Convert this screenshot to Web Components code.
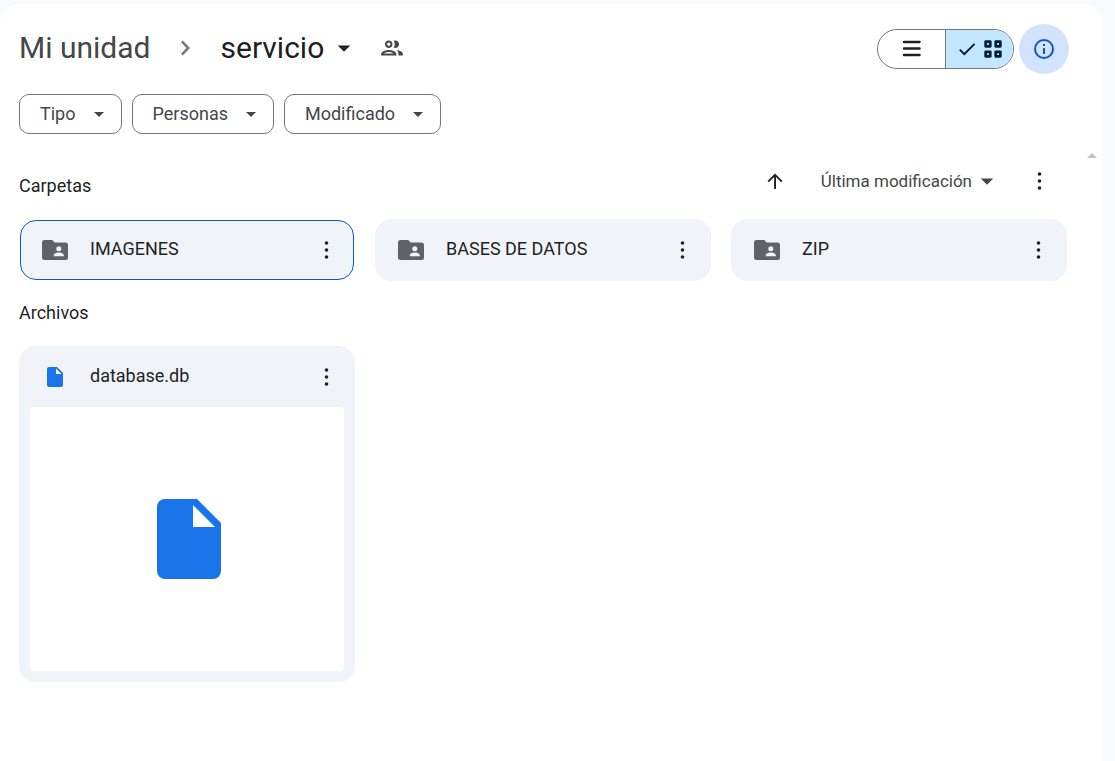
<!DOCTYPE html>
<html lang="es">
<head>
<meta charset="utf-8">
<title>servicio - Mi unidad</title>
<style>
  html { height: 100%; }
  body {
    margin: 0;
    min-height: 100%;
    display: flex;
    background: #f8fafd;
    color: #1f1f1f;
    font-family: Roboto, "Liberation Sans", sans-serif;
    font-size: 18px;
    line-height: 24px;
  }
</style>
</head>
<body>
<drive-app></drive-app>
<script>
const ICONS = {
  chevron: ['0 0 24 24', '<path d="M8.3 17.3 13.4 12 8.300 6.700 9.900 5.100 16.600 12 9.900 18.900z"/>'],
  caret: ['0 0 24 24', '<path d="M7 10l5 5 5-5z"/>'],
  menu: ['0 0 24 24', '<g fill="none" stroke="currentColor" stroke-width="2.5" stroke-linecap="round"><path d="M4 5h15.500M4 11.500h15.500M4 18h15.500"/></g>'],
  check: ['0 0 24 24', '<path d="M9 16.2 4.8 12l-1.4 1.4L9 19 21 7l-1.4-1.4z"/>'],
  grid: ['0 0 24 24', '<g fill="none" stroke="currentColor" stroke-width="3" stroke-linejoin="round"><path d="M4 4h5v5H4zM15 4h5v5h-5zM4 15h5v5H4zM15 15h5v5h-5z"/></g>'],
  info: ['0 0 24 24', '<path d="M11 7h2v2h-2zm0 4h2v6h-2zm1-9a10 10 0 1 0 0 20 10 10 0 0 0 0-20zm0 18a8 8 0 1 1 0-16 8 8 0 0 1 0 16z"/>'],
  up: ['0 0 24 24', '<path d="M4.500 12l1.300 1.300L11.100 8V20h1.900V8l5.200 5.300L19.500 12 12 4.500z"/>'],
  dots: ['0 0 24 24', '<circle cx="12.500" cy="5" r="1.800"/><circle cx="12.500" cy="12" r="1.800"/><circle cx="12.500" cy="19" r="1.800"/>'],
  people: ['0 0 24 24', '<path d="M9 13.750c-2.340 0-7 1.170-7 3.500V19h14v-1.750c0-2.330-4.660-3.500-7-3.500zM4.340 17c.84-.58 2.870-1.250 4.660-1.250s3.820.67 4.660 1.250H4.340zM9 12c1.930 0 3.500-1.570 3.500-3.500S10.930 5 9 5 5.500 6.570 5.500 8.500 7.070 12 9 12zm0-5c.83 0 1.500.67 1.500 1.500S9.830 10 9 10s-1.500-.67-1.500-1.500S8.170 7 9 7zm7.040 6.810c1.160.84 1.960 1.960 1.960 3.440V19h4v-1.750c0-2.020-3.500-3.170-5.960-3.440zM15 12c1.930 0 3.500-1.570 3.500-3.500S16.930 5 15 5c-.54 0-1.040.13-1.500.35.63.89 1 1.980 1 3.150s-.37 2.260-1 3.150c.46.220.96.350 1.500.350z"/>'],
  folder: ['0 0 26 20', '<path fill-rule="evenodd" d="M2.500 0h7.700l2.600 2.500H23.500A2.500 2.500 0 0 1 26 5v12.500a2.500 2.500 0 0 1-2.500 2.500h-21A2.500 2.500 0 0 1 0 17.500v-15A2.500 2.500 0 0 1 2.500 0zM16.800 6.300a2.500 2.500 0 1 0 0 5 2.500 2.500 0 0 0 0-5zM16.800 12.400c-1.900 0-5 .9-5 2.500v1.300h10v-1.300c0-1.600-3.100-2.500-5-2.500z"/>'],
  file: ['0 0 64 80', '<path d="M8 0h32l24 24v48a8 8 0 0 1-8 8H8a8 8 0 0 1-8-8V8a8 8 0 0 1 8-8z"/><path fill="#fff" d="M36 6v22h22z"/>'],
};

function define(name, html, setup) {
  const tpl = document.createElement('template');
  tpl.innerHTML = html;
  customElements.define(name, class extends HTMLElement {
    constructor() {
      super();
      this.attachShadow({ mode: 'open' }).append(tpl.content.cloneNode(true));
    }
    connectedCallback() { if (setup) setup(this, this.shadowRoot); }
  });
}

const RESET = `
  *, :host { box-sizing: border-box; }
  button { font: inherit; color: inherit; background: none; border: 0; margin: 0; padding: 0; cursor: pointer; }`;

/* <drive-icon name>: width and height come from --w and --h */
define('drive-icon', `<style>
  :host { display: inline-flex; flex: none; width: var(--w, 24px); height: var(--h, var(--w, 24px)); }
  svg { width: 100%; height: 100%; fill: currentColor; }
</style>`, (host, root) => {
  const [box, body] = ICONS[host.getAttribute('name')];
  root.querySelector('svg')?.remove();
  root.append(document.createRange().createContextualFragment(
    `<svg viewBox="${box}" aria-hidden="true">${body}</svg>`));
});

define('drive-more', `<style>${RESET}
  :host { display: block; flex: none; }
  button { display: flex; align-items: center; justify-content: center; width: 32px; height: 32px; color: #1f1f1f; }
  drive-icon { --w: 24px; }
</style><button aria-label="Más acciones"><drive-icon name="dots"></drive-icon></button>`);

define('drive-chip', `<style>${RESET}
  :host { display: block; }
  button { display: flex; align-items: center; gap: 11px; height: 40px; padding: 0 10px 0 20px;
    border: 1px solid #747775; border-radius: 10px; color: #444746; }
</style><button><slot></slot><drive-icon name="caret"></drive-icon></button>`);

define('drive-breadcrumb', `<style>${RESET}
  :host { display: block; }
  nav { display: flex; align-items: center; font-size: 30px; line-height: 40px; }
  a { color: #444746; text-decoration: none; }
  .sep { --w: 26px; color: #747775; margin: 0 22px; }
  .current { display: flex; align-items: center; gap: 5px; color: #1f1f1f; }
  .current drive-icon { --w: 30px; }
  .shared { display: flex; margin-left: 20px; color: #444746; }
  .shared drive-icon { --w: 26px; }
</style>
<nav aria-label="Ruta">
  <a href="#">Mi unidad</a>
  <drive-icon class="sep" name="chevron"></drive-icon>
  <button class="current">servicio<drive-icon name="caret"></drive-icon></button>
  <button class="shared" aria-label="Compartido"><drive-icon name="people"></drive-icon></button>
</nav>`);

define('view-toggle', `<style>${RESET}
  :host { display: flex; height: 40px; border: 1px solid #747775; border-radius: 20px; overflow: hidden; }
  button { display: flex; align-items: center; justify-content: center; width: 67px; color: #1f1f1f; }
  .on { width: 68px; border-left: 1px solid #747775; background: #c2e7ff; color: #001d35; gap: 4px; }
  .on drive-icon { --w: 22px; }
</style>
<button aria-label="Diseño de lista" aria-pressed="false"><drive-icon name="menu"></drive-icon></button>
<button class="on" aria-label="Diseño de cuadrícula" aria-pressed="true"><drive-icon name="check"></drive-icon><drive-icon name="grid"></drive-icon></button>`);

define('info-button', `<style>${RESET}
  :host { display: block; }
  button { display: flex; align-items: center; justify-content: center; width: 50px; height: 50px;
    border-radius: 50%; background: #d3e3fd; color: #0b57d0; }
  drive-icon { --w: 24px; }
</style><button aria-label="Ver detalles"><drive-icon name="info"></drive-icon></button>`);

define('sort-bar', `<style>${RESET}
  :host { display: flex; align-items: center; color: #444746; }
  .dir { display: flex; margin-right: 34px; color: #1f1f1f; }
  .key { display: flex; align-items: center; font-size: 17px; }
  .key drive-icon { --w: 30px; }
  drive-more { margin-left: 21px; }
</style>
<button class="dir" aria-label="Invertir el orden"><drive-icon name="up"></drive-icon></button>
<button class="key">Última modificación<drive-icon name="caret"></drive-icon></button>
<drive-more></drive-more>`);

define('item-head', `<style>${RESET}
  :host { display: flex; align-items: center; height: 60px; padding: 0 12px 0 21px; }
  .icon { display: flex; justify-content: center; width: 28px; margin-right: 21px; }
  .name { flex: 1; min-width: 0; padding-bottom: 2px; overflow: hidden; text-overflow: ellipsis; white-space: nowrap; }
</style>
<span class="icon"><slot name="icon"></slot></span><span class="name"><slot></slot></span><drive-more></drive-more>`);

define('folder-card', `<style>${RESET}
  :host { display: block; border: 1px solid #f0f4f9; border-radius: 16px; background: #f0f4f9; }
  :host([selected]) { margin: 1px; border-color: #0b57d0; }
  :host([selected]) item-head { height: 58px; margin: 0 -1px; }
  drive-icon { --w: 26px; --h: 20px; color: #5f6368; }
</style><item-head><drive-icon slot="icon" name="folder"></drive-icon><slot></slot></item-head>`);

define('file-card', `<style>${RESET}
  :host { display: flex; flex-direction: column; aspect-ratio: 1; border-radius: 16px; background: #f0f4f9; color: #1f1f1f; padding: 0 0 11px; }
  item-head { height: 61px; padding: 0 13px 0 22px; }
  .small { --w: 16px; --h: 20px; color: #1a73e8; }
  .preview { flex: 1; margin: 0 11px; padding-left: 4px; border-radius: 4px; background: #fff; display: flex; align-items: center; justify-content: center; color: #1a73e8; }
  .preview drive-icon { --w: 64px; --h: 80px; }
</style>
<item-head><drive-icon class="small" slot="icon" name="file"></drive-icon><slot></slot></item-head>
<div class="preview"><drive-icon name="file"></drive-icon></div>`);

define('drive-app', `<style>${RESET}
  :host { display: block; flex: 1; position: relative; margin: 4px 12px 0 0; padding: 20px 36px 24px 19px;
    border-radius: 20px 20px 0 0; background: #fff; }
  header { display: flex; align-items: center; gap: 5px; height: 50px; margin-right: -2px; }
  drive-breadcrumb { flex: 1; padding-bottom: 2px; }
  .filters { display: flex; flex-wrap: wrap; gap: 10px; margin-top: 20px; }
  .bar { display: flex; align-items: center; justify-content: space-between; margin-top: 30px; }
  .bar sort-bar { margin-right: 12px; }
  h2 { margin: 0; font-size: 18px; line-height: 24px; font-weight: 400; }
  .bar h2 { padding-top: 10px; }
  .grid { display: grid; grid-template-columns: repeat(3, minmax(0, 1fr)); gap: 20px; }
  .folders { margin: 21px 0 20px; }
  .files { margin-top: 21px; }
  .scroll { position: absolute; top: 149px; right: 6px; border: 5px solid transparent; border-top: 0; border-bottom: 5px solid #c1c1c1; }
</style>
<header><drive-breadcrumb></drive-breadcrumb><view-toggle></view-toggle><info-button></info-button></header>
<div class="filters"><drive-chip>Tipo</drive-chip><drive-chip>Personas</drive-chip><drive-chip>Modificado</drive-chip></div>
<main>
  <div class="bar"><h2>Carpetas</h2><sort-bar></sort-bar></div>
  <div class="grid folders">
    <folder-card selected>IMAGENES</folder-card>
    <folder-card>BASES DE DATOS</folder-card>
    <folder-card>ZIP</folder-card>
  </div>
  <h2>Archivos</h2>
  <div class="grid files"><file-card>database.db</file-card></div>
</main>
<span class="scroll"></span>`);
</script>
</body>
</html>
